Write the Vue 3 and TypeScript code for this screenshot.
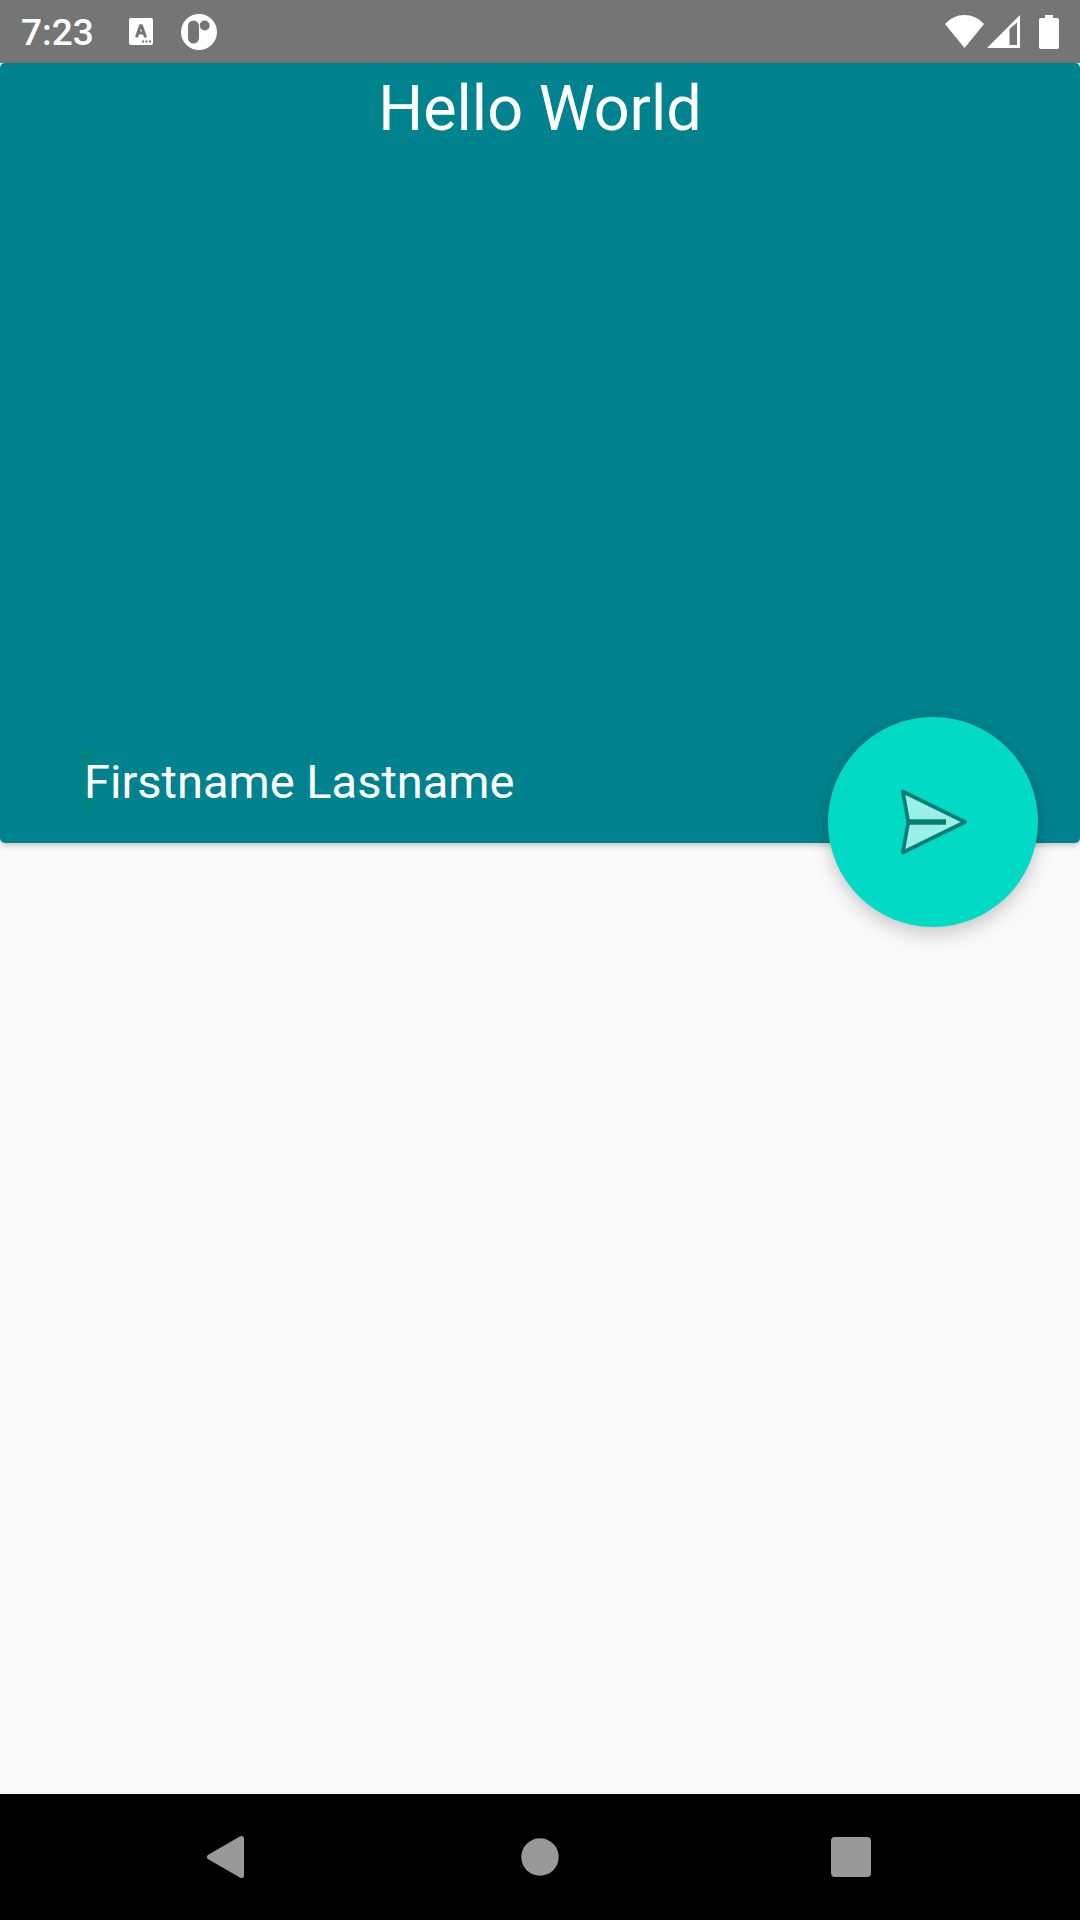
<script setup lang="ts">
import { ref } from 'vue'

const time = ref<string>('7:23')
const title = ref<string>('Hello World')
const fullName = ref<string>('Firstname Lastname')
</script>

<template>
  <div class="screen">
    <header class="status">
      <div class="status-left">
        <time class="clock">{{ time }}</time>
        <svg class="keyboard" viewBox="0 0 24 27" aria-hidden="true">
          <rect width="24" height="27" rx="2" fill="#fff" />
          <path d="M7.800 18.200 11.500 7.800H12.500L16.200 18.200M9 15h6" fill="none" stroke="#757575" stroke-width="3" stroke-linecap="round" stroke-linejoin="round" />
          <path d="M13 23.500h2M16.500 23.500h2M20 23.500h2" stroke="#757575" stroke-width="2" />
        </svg>
        <svg class="app" viewBox="0 0 36 36" aria-hidden="true">
          <circle cx="18" cy="18" r="18" fill="#fff" />
          <rect x="7" y="6.500" width="11" height="23" rx="5.500" fill="#757575" />
          <circle cx="23.700" cy="11.500" r="5" fill="#757575" />
        </svg>
      </div>
      <div class="status-right">
        <svg class="wifi" viewBox="0 0 39 33" aria-hidden="true">
          <path d="M0 9C11-3 28-3 39 9L19.500 33Z" fill="#fff" />
        </svg>
        <svg class="signal" viewBox="0 0 33 33" aria-hidden="true">
          <path fill-rule="evenodd" d="M33 0V33H0ZM22.500 14V30H30V7.500Z" fill="#fff" />
        </svg>
        <svg class="battery" viewBox="0 0 20 34" aria-hidden="true">
          <path d="M6 0h8v3h4a2 2 0 0 1 2 2v27a2 2 0 0 1-2 2H2a2 2 0 0 1-2-2V5a2 2 0 0 1 2-2h4Z" fill="#fff" />
        </svg>
      </div>
    </header>

    <main class="content">
      <section class="card">
        <h1 class="title">{{ title }}</h1>
        <p class="name">{{ fullName }}</p>
        <button class="fab" type="button" aria-label="Send">
          <svg viewBox="0 0 80 80" aria-hidden="true">
            <path d="M9.800 9.500 72 40 9.800 70.500 15 41.500V38.500Z" fill="#9aefe6" stroke="#067f74" stroke-width="3.800" stroke-linejoin="round" />
            <path d="M15 40H53" stroke="#067f74" stroke-width="5.500" />
          </svg>
        </button>
      </section>
    </main>

    <nav class="navbar" aria-label="System">
      <button type="button" aria-label="Back">
        <svg viewBox="0 0 48 48" aria-hidden="true">
          <path d="M4.500 24 36.500 5.500V42.500Z" fill="#999" stroke="#999" stroke-width="5" stroke-linejoin="round" />
        </svg>
      </button>
      <button type="button" aria-label="Home">
        <svg viewBox="0 0 48 48" aria-hidden="true">
          <circle cx="24" cy="24" r="18.700" fill="#999" />
        </svg>
      </button>
      <button type="button" aria-label="Recent apps">
        <svg viewBox="0 0 48 48" aria-hidden="true">
          <rect x="4" y="4" width="40" height="40" rx="4" fill="#999" />
        </svg>
      </button>
    </nav>
  </div>
</template>

<style>
body {
  margin: 0;
  background: #fafafa;
}
</style>

<style scoped>
.screen {
  display: flex;
  flex-direction: column;
  min-height: 100vh;
  background: #fafafa;
  color: #fff;
  font-family: Roboto, 'Noto Sans', sans-serif;
}

.status {
  display: flex;
  align-items: center;
  justify-content: space-between;
  height: 63px;
  padding: 0 21px;
  background: #757575;
}

.status-left,
.status-right {
  display: flex;
  align-items: center;
}

.clock {
  padding-top: 2px;
  margin-right: 35px;
  font-size: 37px;
  font-weight: 500;
  line-height: 61px;
}

.keyboard {
  width: 24px;
  height: 27px;
  margin-right: 28px;
}

.app {
  width: 36px;
  height: 36px;
}

.wifi {
  width: 39px;
  height: 33px;
}

.signal {
  width: 33px;
  height: 33px;
  margin: 0 19px 0 3px;
}

.battery {
  width: 20px;
  height: 34px;
}

.content {
  flex: 1;
}

.card {
  position: relative;
  display: flex;
  flex-direction: column;
  justify-content: space-between;
  box-sizing: border-box;
  min-height: 780px;
  padding: 9px 0 32px 84px;
  border-radius: 5px;
  background: #00838f;
  box-shadow: 0 2px 6px rgba(0, 0, 0, 0.24);
}

.title {
  margin: 0 0 0 -84px;
  font-size: 63px;
  font-weight: 400;
  line-height: 74px;
  text-align: center;
}

.name {
  margin: 0;
  padding-top: 4px;
  background: linear-gradient(#058573, #058573) left / 5px 100% no-repeat;
  font-size: 47px;
  line-height: 59px;
}

.fab {
  position: absolute;
  right: 42px;
  bottom: -84px;
  display: flex;
  align-items: center;
  justify-content: center;
  width: 210px;
  height: 210px;
  padding: 0;
  border: 0;
  border-radius: 50%;
  background: #03dac6;
  box-shadow: 0 8px 20px rgba(0, 0, 0, 0.18), 0 0 10px rgba(0, 0, 0, 0.06);
}

.fab svg {
  width: 80px;
  height: 80px;
}

.navbar {
  display: grid;
  grid-template-columns: repeat(3, 1fr);
  height: 126px;
  padding: 0 74px;
  background: #000;
}

.navbar button {
  display: flex;
  align-items: center;
  justify-content: center;
  padding: 0;
  border: 0;
  background: none;
}

.navbar svg {
  width: 48px;
  height: 48px;
}
</style>
